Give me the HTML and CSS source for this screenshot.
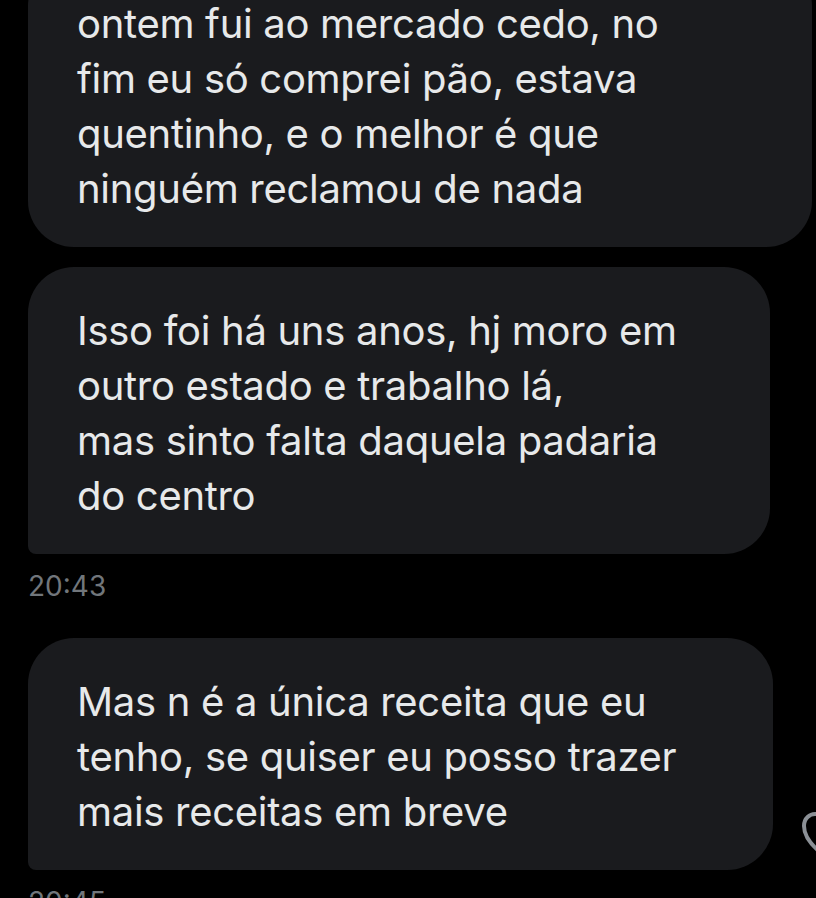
FILE: index.html
```html
<!DOCTYPE html>
<html lang="pt">
<head>
    <meta charset="UTF-8">
    <meta name="viewport" content="width=device-width, initial-scale=1.0">
    <title>Mensagens</title>
    <link rel="stylesheet" href="styles.css">
</head>
<body>
    <div class="conversation">
        <div class="bubble bubble-first">
            <p>ontem fui ao mercado cedo, no<br>fim eu só comprei pão, estava<br>quentinho, e o melhor é que<br>ninguém reclamou de nada</p>
        </div>

        <div class="bubble bubble-mid">
            <p>Isso foi há uns anos, hj moro em<br>outro estado e trabalho lá,<br>mas sinto falta daquela padaria<br>do centro</p>
        </div>
        <div class="time">20:43</div>

        <div class="message-row">
            <div class="bubble bubble-last">
                <p>Mas n é a única receita que eu<br>tenho, se quiser eu posso trazer<br>mais receitas em breve</p>
            </div>
            <svg class="react-icon" width="40" height="48" viewBox="0 0 40 48">
                <path d="M20 44 C8 34 4 26 4 18 C4 10 10 6 15 6 C20 6 22 10 22 10" fill="none" stroke="#8b9096" stroke-width="4" stroke-linecap="round"/>
            </svg>
        </div>
        <div class="time">20:45</div>
    </div>
</body>
</html>
```

FILE: styles.css
```css
body {
    margin: 0;
    background-color: #000;
    font-family: Inter, "Noto Sans", sans-serif;
    overflow: hidden;
}

.conversation {
    display: flex;
    flex-direction: column;
    align-items: flex-start;
    padding-left: 28px;
}

.bubble {
    background-color: #1a1b1e;
    color: #e7e9ea;
    border-radius: 46px;
    padding: 36px 30px 31px 49px;
    box-sizing: border-box;
}

.bubble p {
    margin: 0;
    font-size: 40px;
    line-height: 55px;
    letter-spacing: -0.3px;
    white-space: nowrap;
}

.bubble-first {
    width: 784px;
    margin-top: -40px;
    margin-bottom: 20px;
}

.bubble-mid {
    width: 742px;
    border-bottom-left-radius: 8px;
}

.bubble-last {
    width: 745px;
    border-bottom-left-radius: 8px;
}

.time {
    color: #71767b;
    font-size: 28px;
    line-height: 40px;
    margin-top: 12px;
    margin-bottom: 32px;
}

.message-row {
    position: relative;
}

.react-icon {
    position: absolute;
    left: 772px;
    top: 170px;
}
```
